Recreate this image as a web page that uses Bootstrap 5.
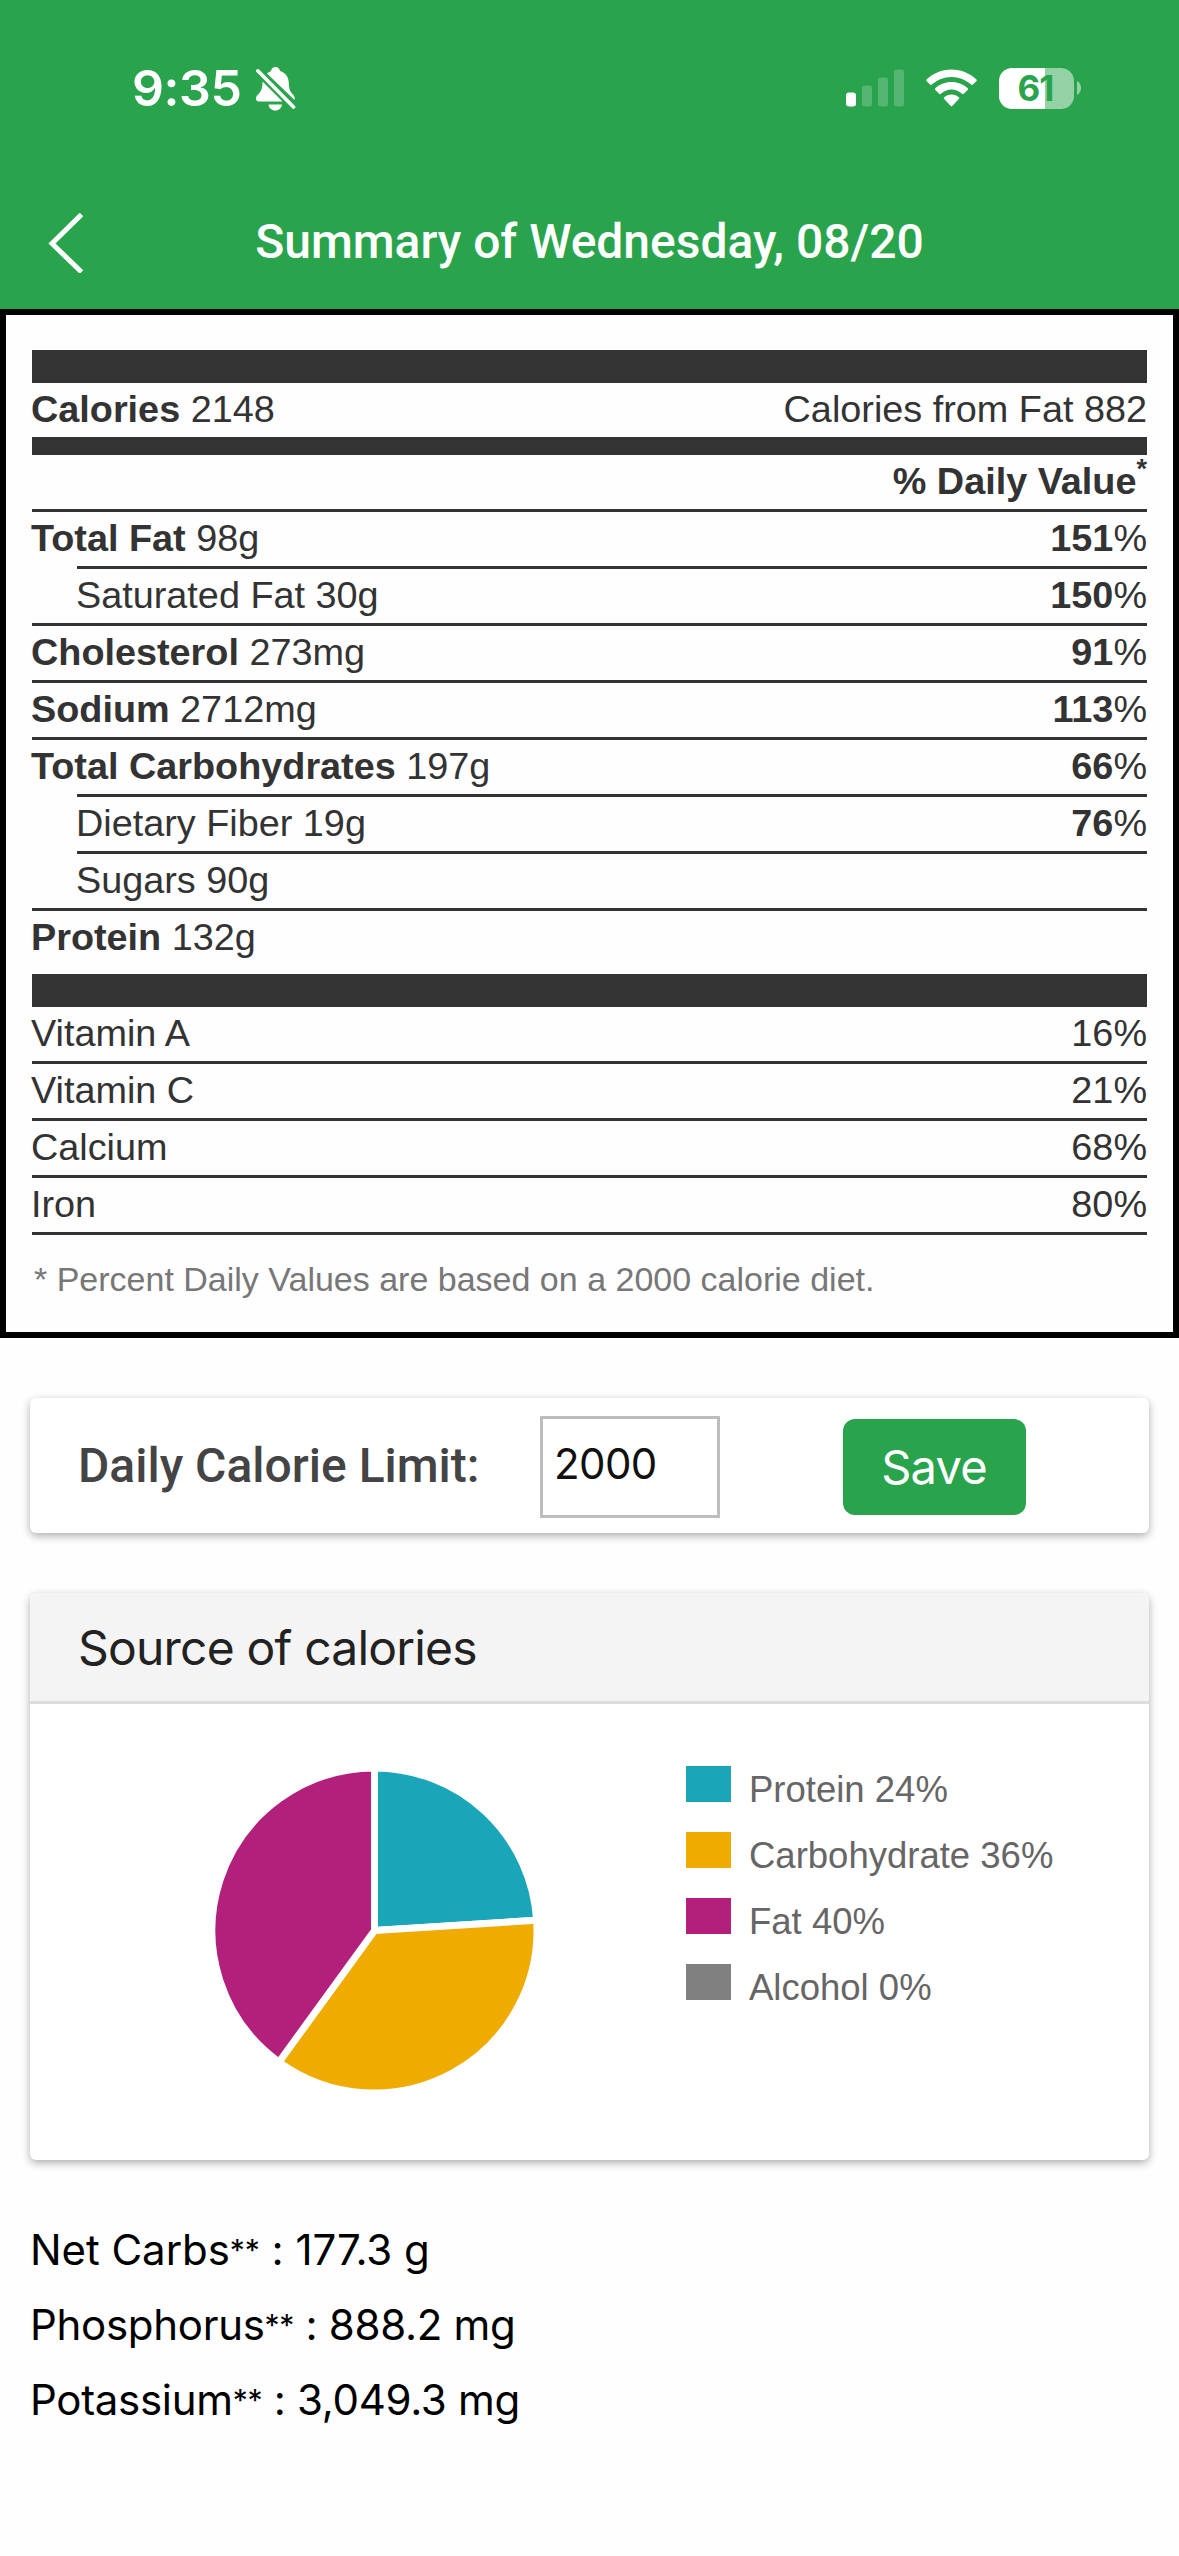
<!DOCTYPE html>
<html lang="en">
<head>
<meta charset="utf-8">
<meta name="viewport" content="width=device-width, initial-scale=1">
<title>Summary of Wednesday, 08/20</title>
<link href="https://cdn.jsdelivr.net/npm/bootstrap@5.3.0/dist/css/bootstrap.min.css" rel="stylesheet">
<style>
  body { font-family: Inter, "Liberation Sans", sans-serif; color: #000; background: #fefefe; line-height: 1; }
  .app-head { background: #29a44d; height: 309px; }
  .status-bar { height: 176px; padding: 0 98px 0 132px; }
  .clock { font-size: 50px; font-weight: 600; letter-spacing: -.4px; line-height: 60px; }
  .bell { margin-left: 14px; margin-top: 1px; }
  .status-gap { margin-left: 22px; }
  .battery-tip { margin-left: 3px; }
  .title-bar { height: 133px; padding: 0 48px; }
  .title-text { font: 500 48px/60px Roboto, sans-serif; padding-bottom: 1px; letter-spacing: -.03px; }
  .title-end { width: 35px; }
  .battery { width: 75px; height: 41px; border-radius: 13px; font-size: 35px; font-weight: 700; color: #29a44d; line-height: 41px; letter-spacing: -1px; padding-right: 2px;
    background: linear-gradient(90deg, #fff 46px, #94d2a6 46px); }
  .facts { border: 6px solid #000; padding: 35px 26px 0; height: 1029px; font: 37.8px/52px "Liberation Sans", Arial, sans-serif; color: #333; background: #fefefe; }
  .bar-thick { height: 33px; background: #333; }
  .bar-mid { height: 18px; background: #333; }
  .bar-gap { margin-top: 9px; }
  .fact-row { height: 54px; white-space: nowrap; }
  .fact-row > span:first-child { margin-left: -1px; }
  .ruled { height: 57px; border-top: 3px solid #333; }
  .indented { margin-left: 45px; }
  .dv-star { font-size: 27px; line-height: 0; vertical-align: 16px; }
  .footnote { font-size: 34px; line-height: 40px; color: #777; padding: 24px 0 0 2px; border-top: 3px solid #333; white-space: nowrap; }
  .panel { margin: 0 30px; border: 0; border-radius: 6px; background: #fff; box-shadow: 0 3px 9px rgba(0,0,0,.32); }
  .limit-panel { height: 135px; margin-top: 60px; padding: 2px 0 0 48px; }
  .limit-label { font: 500 48px/56px Roboto, sans-serif; color: #444; width: 462px; padding-bottom: 2px; white-space: nowrap; }
  .limit-input { width: 180px; height: 102px; border: 3px solid #bdbdbd; border-radius: 0; padding: 0 0 6px 11px; font-size: 42px; letter-spacing: -.6px; color: #111; background: #fff; }
  .save-btn { width: 183px; height: 96px; margin-left: 123px; border: 0; border-radius: 12px; background: #29a44d; color: #fff; font-size: 47px; letter-spacing: -.8px; line-height: 96px; padding: 0 1px 0 0; }
  .source-panel { height: 567px; margin-top: 60px; }
  .source-head { height: 111px; background: #f4f4f4; border-bottom: 3px solid #ddd; border-radius: 6px 6px 0 0; padding: 1px 48px 0; font-size: 48px; letter-spacing: -.8px; color: #222; }
  .source-body { padding: 60px 0 0 178px; }
  .legend { margin: 2px 0 0 145px; font: 36.5px/36px "Liberation Sans", Helvetica, sans-serif; color: #666; }
  .legend-item { height: 36px; margin-bottom: 30px; white-space: nowrap; }
  .swatch { width: 45px; height: 36px; }
  .legend-item span:last-child { margin: 6px 0 0 18px; }
  .sw-protein { background: #1ba5b8; }
  .sw-carb { background: #f0ab00; }
  .sw-fat { background: #b3207b; }
  .sw-alcohol { background: #808080; }
  .extras { padding: 52px 30px 0; font-size: 42px; letter-spacing: -.3px; line-height: 75px; white-space: nowrap; }
  .extras div:first-child { letter-spacing: -.05px; }
  .extras sup { font-size: 30px; line-height: 0; top: -.15em; }
</style>
</head>
<body>
<header class="app-head text-white">
  <div class="status-bar d-flex align-items-center justify-content-between">
    <div class="d-flex align-items-center">
      <span class="clock">9:35</span>
      <svg width="40" height="44" viewBox="0 0 40 44" fill="#fff" class="bell">
        <path d="M11 6.5C13 5 14 4.500 15 4C15.500 1.500 17.200 0 19.500 0C21.800 0 23.500 1.500 24 4C30 6 32.500 10 32.800 16C33 22 34 24.500 37 27.500C38.500 29 39 30.500 38.500 33Z"/>
        <path d="M6.500 14.500L26.500 34.500H3C1 34.500 0 33.300 0 31.500C0 29.500 1 28.500 2.500 27C6 23.500 6.500 20 6.500 14.500Z"/>
        <path d="M12.500 37.500H26C25.500 41 23 43.500 19.300 43.500C15.500 43.500 13 41 12.500 37.500Z"/>
        <path d="M1.800 3.800L37.500 40" stroke="#fff" stroke-width="3.600" stroke-linecap="round"/>
      </svg>
    </div>
    <div class="d-flex align-items-center">
      <svg width="58" height="38" viewBox="0 0 58 38" fill="#fff">
        <rect x="0" y="23.500" width="10" height="14" rx="3"/>
        <g opacity=".2"><rect x="16" y="16.500" width="10" height="21" rx="3"/><rect x="32" y="8.500" width="10" height="29" rx="3"/><rect x="48" y="0.500" width="10" height="37" rx="3"/></g>
      </svg>
      <svg width="51" height="38" viewBox="0 0 51 38" fill="#fff" class="status-gap">
        <path d="M25.500 0.500C35.500 0.500 44 4.500 50.200 10.300C50.900 11 50.900 11.600 50.300 12.200L47 15.600C46.400 16.200 45.900 16.200 45.200 15.600C39.800 10.800 33.200 7.900 25.500 7.900C17.800 7.900 11.200 10.800 5.800 15.600C5.100 16.200 4.600 16.200 4 15.600L.7 12.200C.1 11.600 .1 11 .8 10.300C7 4.500 15.500 .5 25.500 .5Z"/>
        <path d="M25.500 13C32 13 37.500 15.500 41.500 19C42.200 19.700 42.200 20.300 41.600 20.900L37.800 24.800C37.200 25.400 36.700 25.400 36 24.800C33.200 22.300 29.700 20.600 25.500 20.600C21.300 20.600 17.800 22.300 15 24.800C14.300 25.400 13.800 25.400 13.200 24.800L9.400 20.900C8.800 20.300 8.800 19.700 9.500 19C13.500 15.500 19 13 25.500 13Z"/>
        <path d="M25.500 25.600C28.500 25.600 31 26.800 32.800 28.300C33.400 28.900 33.400 29.400 32.800 30L26.500 36.700C25.800 37.400 25.200 37.400 24.500 36.700L18.200 30C17.600 29.400 17.600 28.900 18.200 28.300C20 26.800 22.500 25.600 25.500 25.600Z"/>
      </svg>
      <div class="battery status-gap text-center">61</div>
      <svg width="4" height="14" viewBox="0 0 4 14" class="battery-tip"><path d="M0 0C5.300 2.500 5.300 11.500 0 14Z" fill="#94d2a6"/></svg>
    </div>
  </div>
  <div class="title-bar d-flex align-items-center">
    <svg width="35" height="60" viewBox="0 0 35 60" fill="none" stroke="#fff" stroke-width="5"><path d="M33.500 1.500L4 30.500L33.500 59"/></svg>
    <div class="title-text flex-grow-1 text-center">Summary of Wednesday, 08/20</div>
    <div class="title-end"></div>
  </div>
</header>

<main>
  <section class="facts">
    <div class="bar-thick"></div>
    <div class="fact-row d-flex justify-content-between"><span><b>Calories</b> 2148</span><span>Calories from Fat 882</span></div>
    <div class="bar-mid"></div>
    <div class="fact-row d-flex justify-content-end fw-bold"><span>% Daily Value<span class="dv-star">*</span></span></div>
    <div class="fact-row ruled d-flex justify-content-between"><span><b>Total Fat</b> 98g</span><span><b>151</b>%</span></div>
    <div class="fact-row ruled indented d-flex justify-content-between"><span>Saturated Fat 30g</span><span><b>150</b>%</span></div>
    <div class="fact-row ruled d-flex justify-content-between"><span><b>Cholesterol</b> 273mg</span><span><b>91</b>%</span></div>
    <div class="fact-row ruled d-flex justify-content-between"><span><b>Sodium</b> 2712mg</span><span><b>113</b>%</span></div>
    <div class="fact-row ruled d-flex justify-content-between"><span><b>Total Carbohydrates</b> 197g</span><span><b>66</b>%</span></div>
    <div class="fact-row ruled indented d-flex justify-content-between"><span>Dietary Fiber 19g</span><span><b>76</b>%</span></div>
    <div class="fact-row ruled indented"><span>Sugars 90g</span></div>
    <div class="fact-row ruled"><span><b>Protein</b> 132g</span></div>
    <div class="bar-thick bar-gap"></div>
    <div class="fact-row d-flex justify-content-between"><span>Vitamin A</span><span>16%</span></div>
    <div class="fact-row ruled d-flex justify-content-between"><span>Vitamin C</span><span>21%</span></div>
    <div class="fact-row ruled d-flex justify-content-between"><span>Calcium</span><span>68%</span></div>
    <div class="fact-row ruled d-flex justify-content-between"><span>Iron</span><span>80%</span></div>
    <div class="footnote">* Percent Daily Values are based on a 2000 calorie diet.</div>
  </section>

  <section class="card panel limit-panel flex-row align-items-center">
    <label class="limit-label" for="limit">Daily Calorie Limit:</label>
    <input id="limit" class="form-control limit-input" type="text" value="2000">
    <button class="btn save-btn" type="button">Save</button>
  </section>

  <section class="card panel source-panel">
    <div class="source-head d-flex align-items-center">Source of calories</div>
    <div class="source-body d-flex align-items-start">
      <svg width="333" height="333" viewBox="-166.500 -166.500 333 333" stroke="#fff" stroke-width="7" stroke-linejoin="round">
        <path fill="#1ba5b8" d="M0 0V-162.500A162.500 162.500 0 0 1 162.180 -10.200Z"/>
        <path fill="#f0ab00" d="M0 0L162.180 -10.200A162.500 162.500 0 0 1 -95.520 131.470Z"/>
        <path fill="#b3207b" d="M0 0L-95.520 131.470A162.500 162.500 0 0 1 0 -162.500Z"/>
      </svg>
      <div class="legend">
        <div class="legend-item d-flex"><span class="swatch sw-protein"></span><span>Protein 24%</span></div>
        <div class="legend-item d-flex"><span class="swatch sw-carb"></span><span>Carbohydrate 36%</span></div>
        <div class="legend-item d-flex"><span class="swatch sw-fat"></span><span>Fat 40%</span></div>
        <div class="legend-item d-flex"><span class="swatch sw-alcohol"></span><span>Alcohol 0%</span></div>
      </div>
    </div>
  </section>

  <section class="extras">
    <div>Net Carbs<sup>**</sup> : 177.3 g</div>
    <div>Phosphorus<sup>**</sup> : 888.2 mg</div>
    <div>Potassium<sup>**</sup> : 3,049.3 mg</div>
  </section>
</main>
<script src="https://cdn.jsdelivr.net/npm/bootstrap@5.3.0/dist/js/bootstrap.bundle.min.js"></script>
</body>
</html>
